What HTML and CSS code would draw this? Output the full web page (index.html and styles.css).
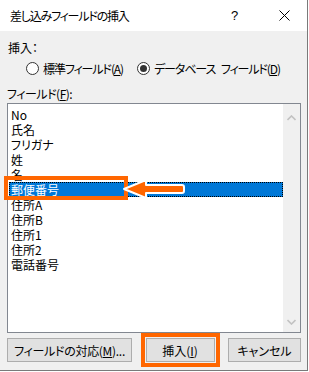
FILE: index.html
```html
<!DOCTYPE html>
<html lang="ja">
<head>
<meta charset="utf-8">
<link rel="stylesheet" href="styles.css">
</head>
<body>
<div class="window">
  <div class="titlebar">
    <span class="title">差し込みフィールドの挿入</span>
    <span class="help">?</span>
    <span class="close"><svg width="11" height="11" viewBox="0 0 11 11"><path d="M0.5 0.5 L10.5 10.5 M10.5 0.5 L0.5 10.5" stroke="#000" stroke-width="1" fill="none"/></svg></span>
  </div>
  <div class="content">
    <div class="label insert-label">挿入：</div>
    <div class="radios">
      <label class="radio"><span class="circle"></span><span class="radio-text">標準フィールド(<u>A</u>)</span></label>
      <label class="radio"><span class="circle checked"></span><span class="radio-text">データベース フィールド(<u>D</u>)</span></label>
    </div>
    <div class="label field-label">フィールド(<u>F</u>):</div>
    <div class="listbox">
      <div class="items">
        <div class="item">No</div>
        <div class="item">氏名</div>
        <div class="item">フリガナ</div>
        <div class="item">姓</div>
        <div class="item">名</div>
        <div class="item selected">郵便番号</div>
        <div class="item">住所A</div>
        <div class="item">住所B</div>
        <div class="item">住所1</div>
        <div class="item">住所2</div>
        <div class="item">電話番号</div>
      </div>
      <div class="scrollbar">
        <svg class="arrow-up" width="9" height="6" viewBox="0 0 9 6"><path d="M0.5 5 L4.5 1 L8.5 5" stroke="#c2c2c2" stroke-width="1.6" fill="none"/></svg>
        <svg class="arrow-down" width="9" height="6" viewBox="0 0 9 6"><path d="M0.5 1 L4.5 5 L8.5 1" stroke="#c2c2c2" stroke-width="1.6" fill="none"/></svg>
      </div>
    </div>
    <div class="buttons">
      <button class="btn btn-map">フィールドの対応(<u>M</u>)...</button>
      <button class="btn btn-insert">挿入(<u>I</u>)</button>
      <button class="btn btn-cancel">キャンセル</button>
    </div>
  </div>
  <div class="annot-box"></div>
  <svg class="annot-arrow" width="70" height="24" viewBox="0 0 70 24"><path d="M3 12 L25 3 L25 8 L61 8 Q63 8 63 10 L63 14 Q63 16 61 16 L25 16 L25 21 Z" fill="#ff6600" stroke="#fff" stroke-width="2" stroke-linejoin="round"/></svg>
</div>
</body>
</html>
```
FILE: styles.css
```css
html, body {
  margin: 0;
  padding: 0;
  background: #ffffff;
}
body {
  width: 309px;
  height: 372px;
  overflow: hidden;
  font-family: "Noto Sans CJK JP", "Noto Sans", sans-serif;
  font-size: 12px;
  font-feature-settings: "palt";
  color: #000;
}
.window {
  position: relative;
  width: 307px;
  height: 370px;
  background: #f0f0f0;
  border-right: 1px solid #7a7a7a;
  border-bottom: 1px solid #7a7a7a;
}
.titlebar {
  height: 31px;
  background: #fff;
  display: flex;
  align-items: center;
  padding-left: 10px;
}
.title {
  flex: 1;
  font-size: 12px;
  line-height: 15px;
  letter-spacing: -1.2px;
}
.help {
  width: 10px;
  font-size: 13px;
  margin-right: 38px;
  font-family: "Liberation Sans", sans-serif;
}
.close {
  display: flex;
  width: 11px;
  height: 11px;
  margin-right: 17px;
}
.content {
  padding: 0 6px 0 7px;
}
.label {
  line-height: 15px;
}
.insert-label {
  margin-top: 9px;
  padding-left: 1px;
}
.radios {
  display: flex;
  align-items: center;
  height: 15px;
  margin-top: 6px;
  padding-left: 19px;
  white-space: nowrap;
}
.radio {
  display: flex;
  align-items: center;
  flex-shrink: 0;
  line-height: 15px;
}
.radio-text {
  white-space: nowrap;
  letter-spacing: -1.1px;
  word-spacing: 4px;
}
.radio + .radio {
  margin-left: 14px;
}
.circle {
  width: 11px;
  height: 11px;
  border: 1px solid #333;
  border-radius: 50%;
  background: #fff;
  margin-right: 4px;
  display: flex;
  align-items: center;
  justify-content: center;
  flex-shrink: 0;
}
.circle.checked::after {
  content: "";
  width: 7px;
  height: 7px;
  border-radius: 50%;
  background: #333;
}
.field-label {
  margin-top: 10px;
  letter-spacing: -0.5px;
}
.listbox {
  margin-top: 2px;
  height: 228px;
  border: 1px solid #828790;
  background: #fff;
  display: flex;
}
.items {
  flex: 1;
  padding: 3px 0 0 1px;
}
.item {
  height: 15px;
  line-height: 15px;
  padding-left: 2px;
  white-space: nowrap;
}
.item.selected {
  background: #0078d7;
  color: #fff;
  outline: 1px dotted #000;
  outline-offset: -1px;
}
.scrollbar {
  width: 17px;
  background: #f0f0f0;
  display: flex;
  flex-direction: column;
  justify-content: space-between;
  align-items: center;
  padding: 11px 0 7px;
}
.buttons {
  display: flex;
  justify-content: space-between;
  margin-top: 5px;
}
.btn {
  height: 24px;
  margin: 0;
  padding: 0;
  background: #e1e1e1;
  border: 1px solid #adadad;
  font-family: inherit;
  font-size: 12px;
  font-feature-settings: "palt";
  color: #000;
  white-space: nowrap;
}
.btn-map {
  width: 125px;
  letter-spacing: -0.3px;
}
.btn-insert {
  width: 69px;
  outline: 4px solid #ff6600;
  outline-offset: 1px;
}
.btn-cancel {
  width: 73px;
}
.annot-box {
  position: absolute;
  left: 4px;
  top: 176px;
  width: 116px;
  height: 16px;
  border: 4px solid #ff6600;
}
.annot-arrow {
  position: absolute;
  left: 121px;
  top: 177px;
}
```
